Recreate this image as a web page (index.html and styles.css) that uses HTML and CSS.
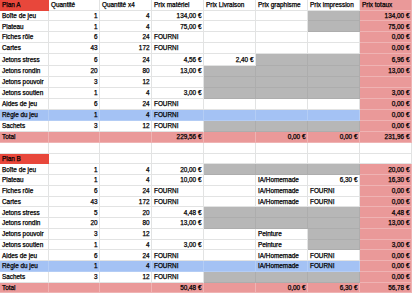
FILE: index.html
```html
<!DOCTYPE html>
<html lang="fr">
<head>
<meta charset="utf-8">
<title>Plans</title>
<link rel="stylesheet" href="styles.css">
</head>
<body>
<div class="sheet">
  <!-- Plan A header -->
  <div class="cell red">Plan A</div><div class="cell">Quantité</div><div class="cell">Quantité x4</div><div class="cell">Prix matériel</div><div class="cell">Prix Livraison</div><div class="cell">Prix graphisme</div><div class="cell">Prix impression</div><div class="cell pink">Prix totaux</div>

  <div class="cell">Boîte de jeu</div><div class="cell num">1</div><div class="cell num">4</div><div class="cell num">134,00 €</div><div class="cell"></div><div class="cell"></div><div class="cell grey"></div><div class="cell pink num">134,00 €</div>
  <div class="cell">Plateau</div><div class="cell num">1</div><div class="cell num">4</div><div class="cell num">75,00 €</div><div class="cell"></div><div class="cell"></div><div class="cell grey"></div><div class="cell pink num">75,00 €</div>
  <div class="cell">Fiches rôle</div><div class="cell num">6</div><div class="cell num">24</div><div class="cell">FOURNI</div><div class="cell"></div><div class="cell"></div><div class="cell"></div><div class="cell pink num">0,00 €</div>
  <div class="cell">Cartes</div><div class="cell num">43</div><div class="cell num">172</div><div class="cell">FOURNI</div><div class="cell"></div><div class="cell"></div><div class="cell"></div><div class="cell pink num">0,00 €</div>
  <div class="cell">Jetons stress</div><div class="cell num">6</div><div class="cell num">24</div><div class="cell num">4,56 €</div><div class="cell num">2,40 €</div><div class="cell grey"></div><div class="cell grey"></div><div class="cell pink num">6,96 €</div>
  <div class="cell">Jetons rondin</div><div class="cell num">20</div><div class="cell num">80</div><div class="cell num">13,00 €</div><div class="cell grey"></div><div class="cell grey"></div><div class="cell grey"></div><div class="cell pink num">13,00 €</div>
  <div class="cell">Jetons pouvoir</div><div class="cell num">3</div><div class="cell num">12</div><div class="cell"></div><div class="cell grey"></div><div class="cell grey"></div><div class="cell grey"></div><div class="cell pink"></div>
  <div class="cell">Jetons soutien</div><div class="cell num">1</div><div class="cell num">4</div><div class="cell num">3,00 €</div><div class="cell grey"></div><div class="cell grey"></div><div class="cell grey"></div><div class="cell pink num">3,00 €</div>
  <div class="cell">Aides de jeu</div><div class="cell num">6</div><div class="cell num">24</div><div class="cell">FOURNI</div><div class="cell"></div><div class="cell"></div><div class="cell"></div><div class="cell pink num">0,00 €</div>
  <div class="cell blue">Règle du jeu</div><div class="cell blue num">1</div><div class="cell blue num">4</div><div class="cell blue">FOURNI</div><div class="cell blue"></div><div class="cell blue"></div><div class="cell blue"></div><div class="cell pink num">0,00 €</div>
  <div class="cell">Sachets</div><div class="cell num">3</div><div class="cell num">12</div><div class="cell">FOURNI</div><div class="cell grey"></div><div class="cell grey"></div><div class="cell grey"></div><div class="cell pink num">0,00 €</div>
  <div class="cell pink">Total</div><div class="cell pink"></div><div class="cell pink"></div><div class="cell pink num">229,56 €</div><div class="cell pink"></div><div class="cell pink num">0,00 €</div><div class="cell pink num">0,00 €</div><div class="cell pink num">231,96 €</div>

  <!-- empty row -->
  <div class="cell"></div><div class="cell"></div><div class="cell"></div><div class="cell"></div><div class="cell"></div><div class="cell"></div><div class="cell"></div><div class="cell"></div>

  <!-- Plan B -->
  <div class="cell red">Plan B</div><div class="cell"></div><div class="cell"></div><div class="cell"></div><div class="cell"></div><div class="cell"></div><div class="cell"></div><div class="cell"></div>

  <div class="cell">Boîte de jeu</div><div class="cell num">1</div><div class="cell num">4</div><div class="cell num">20,00 €</div><div class="cell grey"></div><div class="cell grey"></div><div class="cell grey"></div><div class="cell pink num">20,00 €</div>
  <div class="cell">Plateau</div><div class="cell num">1</div><div class="cell num">4</div><div class="cell num">10,00 €</div><div class="cell"></div><div class="cell">IA/Homemade</div><div class="cell num">6,30 €</div><div class="cell pink num">16,30 €</div>
  <div class="cell">Fiches rôle</div><div class="cell num">6</div><div class="cell num">24</div><div class="cell">FOURNI</div><div class="cell"></div><div class="cell">IA/Homemade</div><div class="cell">FOURNI</div><div class="cell pink num">0,00 €</div>
  <div class="cell">Cartes</div><div class="cell num">43</div><div class="cell num">172</div><div class="cell">FOURNI</div><div class="cell"></div><div class="cell">IA/Homemade</div><div class="cell">FOURNI</div><div class="cell pink num">0,00 €</div>
  <div class="cell">Jetons stress</div><div class="cell num">5</div><div class="cell num">20</div><div class="cell num">4,48 €</div><div class="cell grey"></div><div class="cell grey"></div><div class="cell grey"></div><div class="cell pink num">4,48 €</div>
  <div class="cell">Jetons rondin</div><div class="cell num">20</div><div class="cell num">80</div><div class="cell num">13,00 €</div><div class="cell grey"></div><div class="cell grey"></div><div class="cell grey"></div><div class="cell pink num">13,00 €</div>
  <div class="cell">Jetons pouvoir</div><div class="cell num">3</div><div class="cell num">12</div><div class="cell"></div><div class="cell"></div><div class="cell">Peinture</div><div class="cell grey"></div><div class="cell pink"></div>
  <div class="cell">Jetons soutien</div><div class="cell num">1</div><div class="cell num">4</div><div class="cell num">3,00 €</div><div class="cell"></div><div class="cell">Peinture</div><div class="cell grey"></div><div class="cell pink num">3,00 €</div>
  <div class="cell">Aides de jeu</div><div class="cell num">6</div><div class="cell num">24</div><div class="cell">FOURNI</div><div class="cell"></div><div class="cell">IA/Homemade</div><div class="cell">FOURNI</div><div class="cell pink num">0,00 €</div>
  <div class="cell blue">Règle du jeu</div><div class="cell blue num">1</div><div class="cell blue num">4</div><div class="cell blue">FOURNI</div><div class="cell blue"></div><div class="cell blue">IA/Homemade</div><div class="cell blue">FOURNI</div><div class="cell pink num">0,00 €</div>
  <div class="cell">Sachets</div><div class="cell num">3</div><div class="cell num">12</div><div class="cell">FOURNI</div><div class="cell grey"></div><div class="cell grey"></div><div class="cell grey"></div><div class="cell pink num">0,00 €</div>
  <div class="cell pink">Total</div><div class="cell pink"></div><div class="cell pink"></div><div class="cell pink num">50,48 €</div><div class="cell pink"></div><div class="cell pink num">0,00 €</div><div class="cell pink num">6,30 €</div><div class="cell pink num">56,78 €</div>
</div>
</body>
</html>
```

FILE: styles.css
```css
html, body {
  margin: 0;
  padding: 0;
  background: #ffffff;
  overflow: hidden;
}

.sheet {
  display: grid;
  grid-template-columns: 49px 51px repeat(6, 52px);
  grid-template-rows:
    10.5px 10.75px 10.75px 10.75px 10.75px 12px 11px 11px 11px 11px 11px 11px 11px
    11px
    repeat(13, 10.75px);
  font-family: "Liberation Sans", Arial, sans-serif;
  font-size: 6.4px;
  color: #000000;
  -webkit-text-stroke: 0.25px #000000;
}

.cell {
  box-sizing: border-box;
  display: flex;
  align-items: center;
  padding: 0 2px 0 2px;
  border-right: 1px solid #e2e3e3;
  border-bottom: 1px solid #e2e3e3;
  white-space: nowrap;
  overflow: hidden;
  min-width: 0;
}

.num {
  justify-content: flex-end;
  padding-right: 1.5px;
}

.red {
  background: #e8473b;
  border-color: #e8473b;
}

.pink {
  background: #ea9999;
  border-color: #efb3b3;
}

.grey {
  background: #b7b7b7;
  border-color: #adadad;
}

.blue {
  background: #a4c2f4;
  border-color: #b4cdf5;
}
```
